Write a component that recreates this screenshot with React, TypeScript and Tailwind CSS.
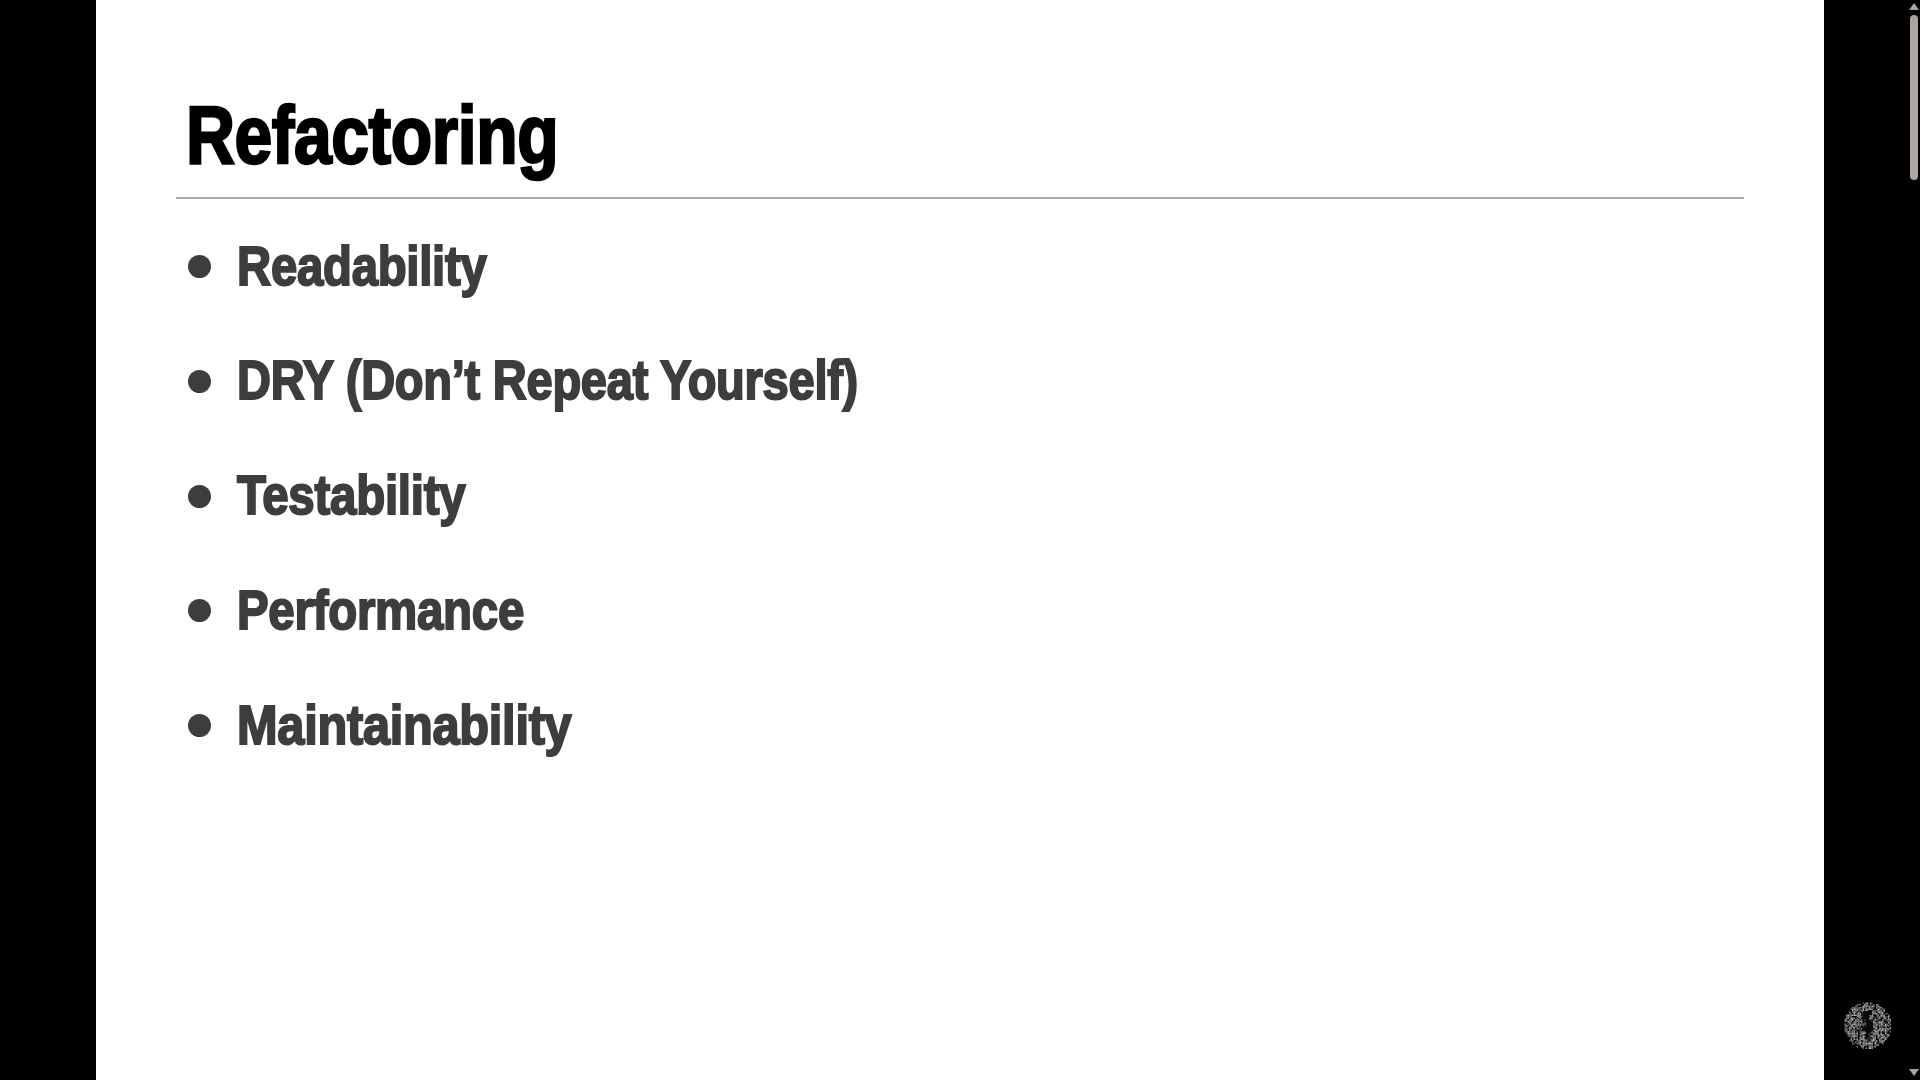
const items = [
  { label: "Readability", spread: "scale-x-[0.86]" },
  { label: "DRY (Don’t Repeat Yourself)", spread: "scale-x-[0.855]" },
  { label: "Testability", spread: "scale-x-[0.863]" },
  { label: "Performance", spread: "scale-x-[0.862]" },
  { label: "Maintainability", spread: "scale-x-[0.886]" },
];

// speckled avatar, dots are seeded so the picture stays the same each run
const avatarDots = () => {
  const dots: { x: number; y: number; o: number }[] = [];
  let seed = 1337;
  const next = () => {
    seed = (seed * 16807) % 2147483647;
    return seed / 2147483647;
  };
  for (let y = 0; y < 48; y += 1.5) {
    for (let x = 0; x < 48; x += 1.5) {
      const dx = x - 24;
      const dy = y - 24;
      if (dx * dx + dy * dy > 23.5 * 23.5) continue;
      if (next() < 0.3) continue;
      dots.push({ x, y, o: 0.3 + next() * 0.6 });
    }
  }
  return dots;
};

const Avatar = () => (
  <svg width="48" height="48" viewBox="0 0 48 48" className="block">
    {avatarDots().map((d) => (
      <rect key={`${d.x}-${d.y}`} x={d.x} y={d.y} width="1.5" height="1.5" fill="#c9c9c4" opacity={d.o} />
    ))}
    <path d="M20 10h9v4h-3v5l4 1v10l-4 2-2 6-2 1 1-8-4-2v-3l4-1v-6l-3-1z" fill="#0a0a0a" />
  </svg>
);

const Scrollbar = () => (
  <div className="flex flex-col h-full w-[10px] items-center pt-[3px] pb-[4px]">
    <div className="w-0 h-0 border-x-[5px] border-x-transparent border-b-[7px] border-b-[#aaa69d]" />
    <div className="w-2 h-[165px] mt-[5px] rounded bg-[#aaa69d]" />
    <div className="mt-auto w-0 h-0 border-x-[5px] border-x-transparent border-t-[7px] border-t-[#aaa69d]" />
  </div>
);

export default function App() {
  return (
    <div className="flex w-[1920px] h-[1080px] overflow-hidden bg-black font-['Liberation_Sans',Arial,sans-serif]">
      <div className="w-[96px] shrink-0 bg-black" />

      <main className="flex-1 bg-white pl-[80px] pr-[80px] pt-[85px]">
        <h1 className="h-[112px] pl-[12px] text-[82px] leading-[100px] font-bold text-black tracking-[-0.5px] whitespace-nowrap origin-left scale-x-[0.827] [-webkit-text-stroke:2.5px_black]">
          Refactoring
        </h1>
        <div className="h-[1.5px] bg-[#a9a9a9]" />

        <ul className="flex flex-col gap-[50.75px] pt-[36px] pl-[12px]">
          {items.map((item) => (
            <li key={item.label} className="flex items-center h-[64px]">
              <span className="w-[23px] h-[23px] rounded-full bg-[#3d3d3f] shrink-0" />
              <span
                className={`ml-[26px] pb-[2px] text-[55px] leading-[64px] font-bold text-[#3d3d3f] tracking-[-0.3px] whitespace-nowrap origin-left [-webkit-text-stroke:2px_#3d3d3f] ${item.spread}`}
              >
                {item.label}
              </span>
            </li>
          ))}
        </ul>
      </main>

      <aside className="relative w-[96px] shrink-0 bg-black flex justify-end pr-[1px]">
        <Scrollbar />
        <div className="absolute left-[19px] top-[1001px]">
          <Avatar />
        </div>
      </aside>
    </div>
  );
}
